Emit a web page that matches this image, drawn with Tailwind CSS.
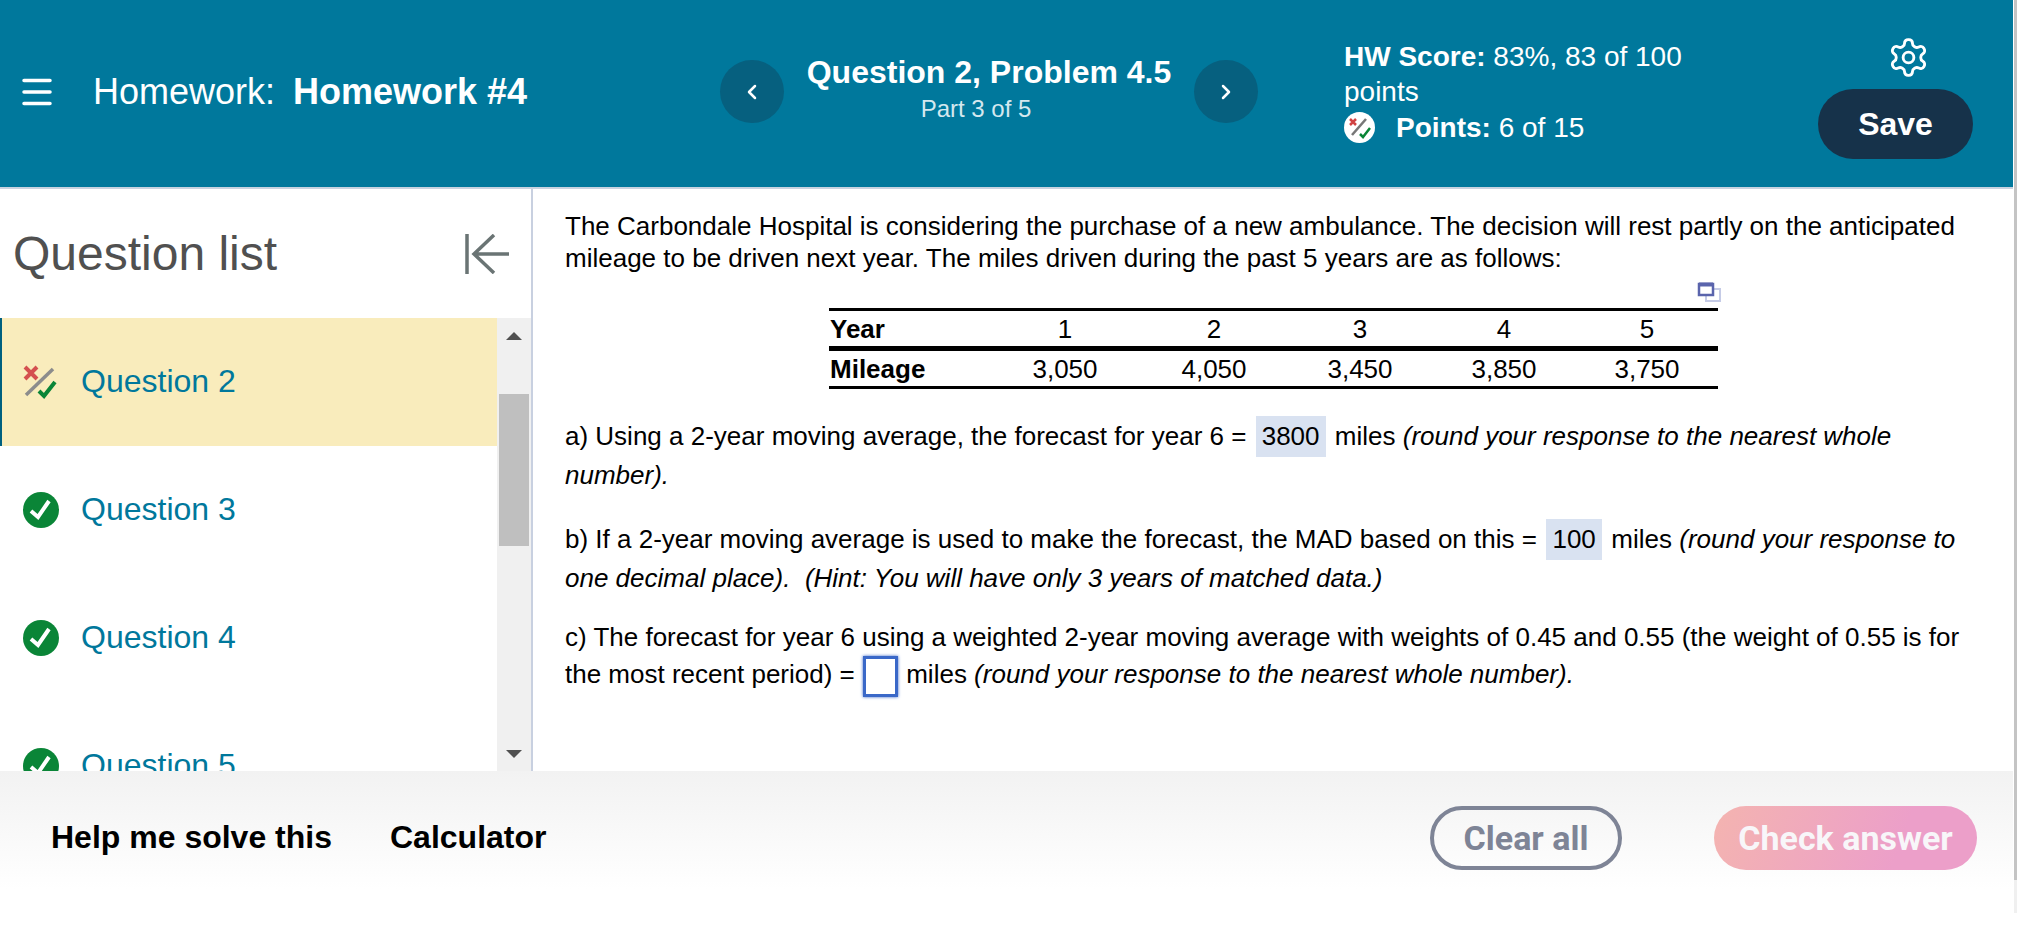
<!DOCTYPE html>
<html lang="en">
<head>
    <meta charset="UTF-8">
    <title>Homework #4</title>
    <script src="https://cdn.jsdelivr.net/npm/@tailwindcss/browser@4"></script>
</head>
<body class="relative h-[940px] w-[2017px] overflow-hidden bg-white font-['Liberation_Sans',Arial,sans-serif] text-black">
    <!-- header -->
    <header class="flex h-[189px] items-center border-b-2 border-[#c8d3e0] bg-[#00789c] text-white">
        <div class="flex w-[720px] items-center pb-[4px]">
            <svg class="ml-[22px] h-[28px] w-[30px]" viewBox="0 0 30 28" fill="none" stroke="white" stroke-width="3.5" stroke-linecap="round"><path d="M2 2.500H28M2 14H28M2 25.500H28"/></svg>
            <span class="ml-[41px] text-[36px] whitespace-nowrap">Homework:</span>
            <span class="ml-[18px] text-[36px] font-bold whitespace-nowrap">Homework #4</span>
        </div>
        <div class="flex w-[538px] items-center justify-between pb-[4px]">
            <button class="flex h-[63px] w-[64px] items-center justify-center rounded-full bg-[#06607f]">
                <svg class="h-[16px] w-[10px]" viewBox="0 0 10 16" fill="none" stroke="white" stroke-width="2.500" stroke-linecap="round" stroke-linejoin="round"><path d="M8 2L2 8L8 14"/></svg>
            </button>
            <div class="pb-[5px] text-center">
                <div class="text-[32px] leading-[40px] font-bold whitespace-nowrap">Question 2, Problem 4.5</div>
                <div class="pr-[26px] text-[24px] leading-[34px] text-[#d5e8ef]">Part 3 of 5</div>
            </div>
            <button class="flex h-[63px] w-[64px] items-center justify-center rounded-full bg-[#06607f]">
                <svg class="h-[16px] w-[10px]" viewBox="0 0 10 16" fill="none" stroke="white" stroke-width="2.500" stroke-linecap="round" stroke-linejoin="round"><path d="M2 2L8 8L2 14"/></svg>
            </button>
        </div>
        <div class="ml-[86px] w-[474px] pb-[3px] text-[28px] leading-[35.500px]">
            <div class="w-[350px]"><b>HW Score:</b> 83%, 83 of 100 points</div>
            <div class="flex items-center">
                <span class="flex h-[31px] w-[31px] items-center justify-center rounded-full bg-white">
                    <svg class="h-[25px] w-[25px]" viewBox="0 0 25 25" fill="none"><path d="M5 20L19 4" stroke="#777" stroke-width="2.500"/><path d="M3 4L9 10M9 4L3 10" stroke="#d14343" stroke-width="2.500"/><path d="M13 19L16 22L23 13" stroke="#0a8537" stroke-width="2.500"/></svg>
                </span>
                <span class="ml-[21px]"><b>Points:</b> 6 of 15</span>
            </div>
        </div>
        <div class="flex w-[155px] flex-col items-center pt-[8px]">
            <svg class="ml-[26px] h-[43px] w-[43px]" viewBox="0 0 24 24" fill="none" stroke="white" stroke-width="1.600" stroke-linecap="round" stroke-linejoin="round"><path d="M12.220 2h-.44a2 2 0 0 0-2 2v.18a2 2 0 0 1-1 1.730l-.43.25a2 2 0 0 1-2 0l-.15-.08a2 2 0 0 0-2.730.73l-.22.38a2 2 0 0 0 .73 2.730l.15.1a2 2 0 0 1 1 1.720v.51a2 2 0 0 1-1 1.740l-.15.09a2 2 0 0 0-.73 2.730l.22.38a2 2 0 0 0 2.730.73l.15-.08a2 2 0 0 1 2 0l.43.25a2 2 0 0 1 1 1.730V20a2 2 0 0 0 2 2h.44a2 2 0 0 0 2-2v-.18a2 2 0 0 1 1-1.730l.43-.25a2 2 0 0 1 2 0l.15.08a2 2 0 0 0 2.730-.73l.22-.39a2 2 0 0 0-.73-2.730l-.15-.08a2 2 0 0 1-1-1.740v-.5a2 2 0 0 1 1-1.740l.15-.09a2 2 0 0 0 .73-2.730l-.22-.38a2 2 0 0 0-2.730-.73l-.15.08a2 2 0 0 1-2 0l-.43-.25a2 2 0 0 1-1-1.730V4a2 2 0 0 0-2-2z"/><circle cx="12" cy="12" r="3"/></svg>
            <button class="mt-[10px] h-[70px] w-[155px] rounded-full bg-[#16324a] text-[32px] font-bold">Save</button>
        </div>
    </header>

    <main class="flex h-[582px]">
        <!-- question list -->
        <aside class="flex w-[533px] shrink-0 flex-col overflow-hidden border-r-2 border-[#c8d0e0]">
            <div class="flex h-[129px] shrink-0 items-center justify-between pr-[20px] pl-[13px]">
                <h2 class="text-[48px] leading-none text-[#505050]">Question list</h2>
                <svg class="h-[40px] w-[48px]" viewBox="0 0 48 40" fill="none" stroke="#6a7474" stroke-width="3.500"><path d="M4 0V40M46 20H11M31 1L11 20L31 39"/></svg>
            </div>
            <div class="flex min-h-0 flex-1">
                <ul class="w-[497px] shrink-0 text-[32px] text-[#00789c]">
                    <li class="flex h-[128px] items-center border-l-2 border-[#00607f] bg-[#f9ecbc] pl-[21px]">
                        <svg class="h-[36px] w-[36px]" viewBox="0 0 36 36" fill="none"><path d="M3 31L30 5" stroke="#8c8c8c" stroke-width="3.500"/><path d="M2 3L14 15M14 3L2 15" stroke="#d4504f" stroke-width="4"/><path d="M16 27L21 32L32 18" stroke="#0a8537" stroke-width="4"/></svg>
                        <span class="ml-[22px] pb-[2px]">Question 2</span>
                    </li>
                    <li class="flex h-[128px] items-center pl-[23px]">
                        <svg class="h-[36px] w-[36px]" viewBox="0 0 36 36"><circle cx="18" cy="18" r="18" fill="#0a8537"/><path d="M8 19L15 25L26 9" fill="none" stroke="white" stroke-width="4"/></svg>
                        <span class="ml-[22px] pb-[2px]">Question 3</span>
                    </li>
                    <li class="flex h-[128px] items-center pl-[23px]">
                        <svg class="h-[36px] w-[36px]" viewBox="0 0 36 36"><circle cx="18" cy="18" r="18" fill="#0a8537"/><path d="M8 19L15 25L26 9" fill="none" stroke="white" stroke-width="4"/></svg>
                        <span class="ml-[22px] pb-[2px]">Question 4</span>
                    </li>
                    <li class="flex h-[128px] items-center pl-[23px]">
                        <svg class="h-[36px] w-[36px]" viewBox="0 0 36 36"><circle cx="18" cy="18" r="18" fill="#0a8537"/><path d="M8 19L15 25L26 9" fill="none" stroke="white" stroke-width="4"/></svg>
                        <span class="ml-[22px] pb-[2px]">Question 5</span>
                    </li>
                </ul>
                <!-- scrollbar -->
                <div class="flex flex-1 flex-col items-center bg-[#f0f0f0]">
                    <div class="mt-[14px] h-0 w-0 border-x-[8px] border-b-[8px] border-x-transparent border-b-[#505050]"></div>
                    <div class="mt-[54px] h-[152px] w-[30px] bg-[#bfbfbf]"></div>
                    <div class="mt-[204px] h-0 w-0 border-x-[8px] border-t-[8px] border-x-transparent border-t-[#505050]"></div>
                </div>
            </div>
        </aside>

        <!-- question -->
        <section class="flex-1 pt-[21px] pl-[32px] text-[26px] whitespace-nowrap">
            <p class="leading-[32px]">The Carbondale Hospital is considering the purchase of a new ambulance. The decision will rest partly on the anticipated<br>mileage to be driven next year. The miles driven during the past 5 years are as follows:</p>
            <div class="ml-[264px] w-[889px]">
                <svg class="mt-[8px] ml-[868px] block h-[21px] w-[25px]" viewBox="0 0 25 21" fill="none"><rect x="9" y="7" width="14" height="12" stroke="#c5cbe6" stroke-width="2"/><rect x="2" y="2" width="14" height="11" fill="white" stroke="#5a64ac" stroke-width="2.500"/><path d="M2 2.500H16" stroke="#5a64ac" stroke-width="4"/></svg>
                <table class="mt-[5px] w-full border-y-[3px] border-black text-[26px] leading-[32px]">
                    <tbody>
                        <tr class="h-[39px] border-b-[5px] border-black">
                            <th class="w-[161px] pl-[1px] text-left font-bold">Year</th>
                            <td class="w-[150px] text-center">1</td><td class="w-[148px] text-center">2</td><td class="w-[144px] text-center">3</td><td class="w-[144px] text-center">4</td><td class="text-center">5</td>
                        </tr>
                        <tr class="h-[39px]">
                            <th class="pl-[1px] text-left font-bold">Mileage</th>
                            <td class="text-center">3,050</td><td class="text-center">4,050</td><td class="text-center">3,450</td><td class="text-center">3,850</td><td class="text-center">3,750</td>
                        </tr>
                    </tbody>
                </table>
            </div>
            <p class="mt-[28px] leading-[39px]">a) Using a 2-year moving average, the forecast for year 6 = <span class="mx-[2px] -my-[2px] inline-block h-[41px] w-[70px] bg-[#d9e2f1] text-center leading-[41px]">3800</span> miles <i>(round your response to the nearest whole<br>number).</i></p>
            <p class="mt-[25px] leading-[39px]">b) If a 2-year moving average is used to make the forecast, the MAD based on this = <span class="mx-[2px] -my-[2px] inline-block h-[41px] w-[56px] bg-[#d9e2f1] text-center leading-[41px]">100</span> miles <i>(round your response to<br>one decimal place).&nbsp; (Hint: You will have only 3 years of matched data.)</i></p>
            <p class="mt-[21px] leading-[37px]">c) The forecast for year 6 using a weighted 2-year moving average with weights of 0.45 and 0.55 (the weight of 0.55 is for<br>the most recent period) = <span class="mx-[1px] -my-[4px] inline-block h-[41px] w-[35px] border-[3px] border-[#3a68c8] align-middle shadow-[0_0_3px_#3a68c8]"></span> miles <i>(round your response to the nearest whole number).</i></p>
        </section>
    </main>

    <!-- footer -->
    <footer class="flex h-[169px] items-start bg-linear-to-b from-[#f2f2f2] to-white to-70% pt-[35px] pr-[40px]">
        <button class="mt-[7px] ml-[51px] text-[32px] font-bold">Help me solve this</button>
        <button class="mt-[7px] ml-[58px] text-[32px] font-bold">Calculator</button>
        <button class="ml-auto h-[64px] w-[192px] rounded-full border-4 border-[#7e8496] font-['Roboto',sans-serif] text-[34px] font-bold text-[#7e8496]">Clear all</button>
        <button class="ml-[92px] h-[64px] w-[263px] rounded-full bg-linear-[110deg] from-[#f4b4b0] to-[#ec9fc9] to-70% font-['Roboto',sans-serif] text-[34px] font-bold text-[#f8f6f9]">Check answer</button>
    </footer>

    <!-- window scrollbar -->
    <div class="absolute top-0 right-0 h-[913px] w-[4px] border-l border-white bg-[#f0f0f0]">
        <div class="h-[880px] bg-[#c4c4c4]"></div>
    </div>
</body>
</html>
